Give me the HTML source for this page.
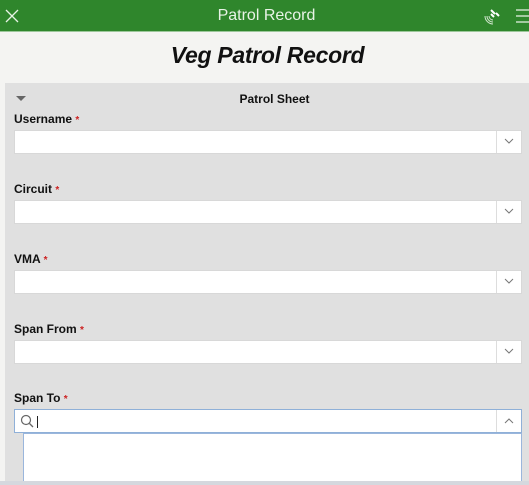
<!DOCTYPE html>
<html><head><style>
*{margin:0;padding:0;box-sizing:border-box}
body{width:529px;height:485px;overflow:hidden;background:#f4f4f2;font-family:"Liberation Sans",sans-serif;position:relative}
.hdr{position:absolute;left:0;top:0;width:529px;height:32px;background:#2f862c;border-bottom:1px solid #9cc79a}
.hdr .t{position:absolute;left:4px;right:0;top:7px;text-align:center;color:#e8f3e6;font-size:16px}
h1{position:absolute;left:0;right:0;top:42px;text-align:center;font-size:23px;font-style:italic;font-weight:bold;color:#111;letter-spacing:-0.3px;padding-left:6px}
.panel{position:absolute;left:5px;top:83px;width:524px;height:402px;background:#e0e0e0}
.ps{position:absolute;left:20px;right:0;top:92px;text-align:center;font-size:12px;font-weight:bold;color:#111}
.lbl{position:absolute;left:14px;font-size:12px;font-weight:bold;color:#111}
.lbl span{color:#c22;font-size:10px}
.inp{position:absolute;left:14px;width:508px;height:24px;background:#fff;border:1px solid #d8d8d8}
.inp .c{position:absolute;right:0;top:0;width:25px;height:22px;border-left:1px solid #ddd}
.inp .c svg{position:absolute;left:7px;top:7px}
</style></head><body>
<div class="hdr">
<svg style="position:absolute;left:5px;top:9px" width="14" height="14"><path d="M1 1L13 13M13 1L1 13" stroke="#e8f3e6" stroke-width="1.3"/></svg>
<div class="t">Patrol Record</div>
<svg style="position:absolute;left:482px;top:6px" width="22" height="22"><path d="M9 4l4 4M14 7l3 3M12 11l-3-3" stroke="#fff" stroke-width="2"/><path d="M3 10a8 8 0 0 0 8 8M5 10a6 6 0 0 0 6 6M7 10a4 4 0 0 0 4 4" stroke="#cfe5cc" fill="none" stroke-width="1"/></svg>
<svg style="position:absolute;left:516px;top:9px" width="13" height="14"><path d="M0 1H13M0 7H13M0 13H13" stroke="#e8f3e6" stroke-width="1.3"/></svg>
</div>
<h1>Veg Patrol Record</h1>
<div class="panel"></div>
<svg style="position:absolute;left:16px;top:96px" width="10" height="6"><path d="M0 0H10L5 5Z" fill="#666"/></svg>
<div class="ps">Patrol Sheet</div>

<div class="lbl" style="top:112px">Username <span>*</span></div>
<div class="inp" style="top:130px"><div class="c"><svg width="10" height="7"><path d="M1 1l4 4 4-4" stroke="#777" fill="none"/></svg></div></div>
<div class="lbl" style="top:182px">Circuit <span>*</span></div>
<div class="inp" style="top:200px"><div class="c"><svg width="10" height="7"><path d="M1 1l4 4 4-4" stroke="#777" fill="none"/></svg></div></div>
<div class="lbl" style="top:252px">VMA <span>*</span></div>
<div class="inp" style="top:270px"><div class="c"><svg width="10" height="7"><path d="M1 1l4 4 4-4" stroke="#777" fill="none"/></svg></div></div>
<div class="lbl" style="top:322px">Span From <span>*</span></div>
<div class="inp" style="top:340px"><div class="c"><svg width="10" height="7"><path d="M1 1l4 4 4-4" stroke="#777" fill="none"/></svg></div></div>
<div class="lbl" style="top:391px">Span To <span>*</span></div>
<div class="inp" style="top:409px;border-color:#8fb0d8"><div class="c"><svg width="10" height="7"><path d="M1 6l4-4 4 4" stroke="#777" fill="none"/></svg></div>
<svg style="position:absolute;left:5px;top:4px" width="20" height="15"><circle cx="6" cy="6" r="4.5" stroke="#666" fill="none" stroke-width="1.2"/><path d="M9.5 9.5L13 13" stroke="#666" stroke-width="1.3"/><path d="M17.5 2V14" stroke="#222" stroke-width="1"/></svg>
</div>
<div style="position:absolute;left:23px;top:433px;width:499px;height:50px;background:#fff;border:1px solid #9ab6dc;border-bottom:none"></div>
<div style="position:absolute;left:0;top:481px;width:529px;height:4px;background:#d5d8de"></div>
</body></html>
